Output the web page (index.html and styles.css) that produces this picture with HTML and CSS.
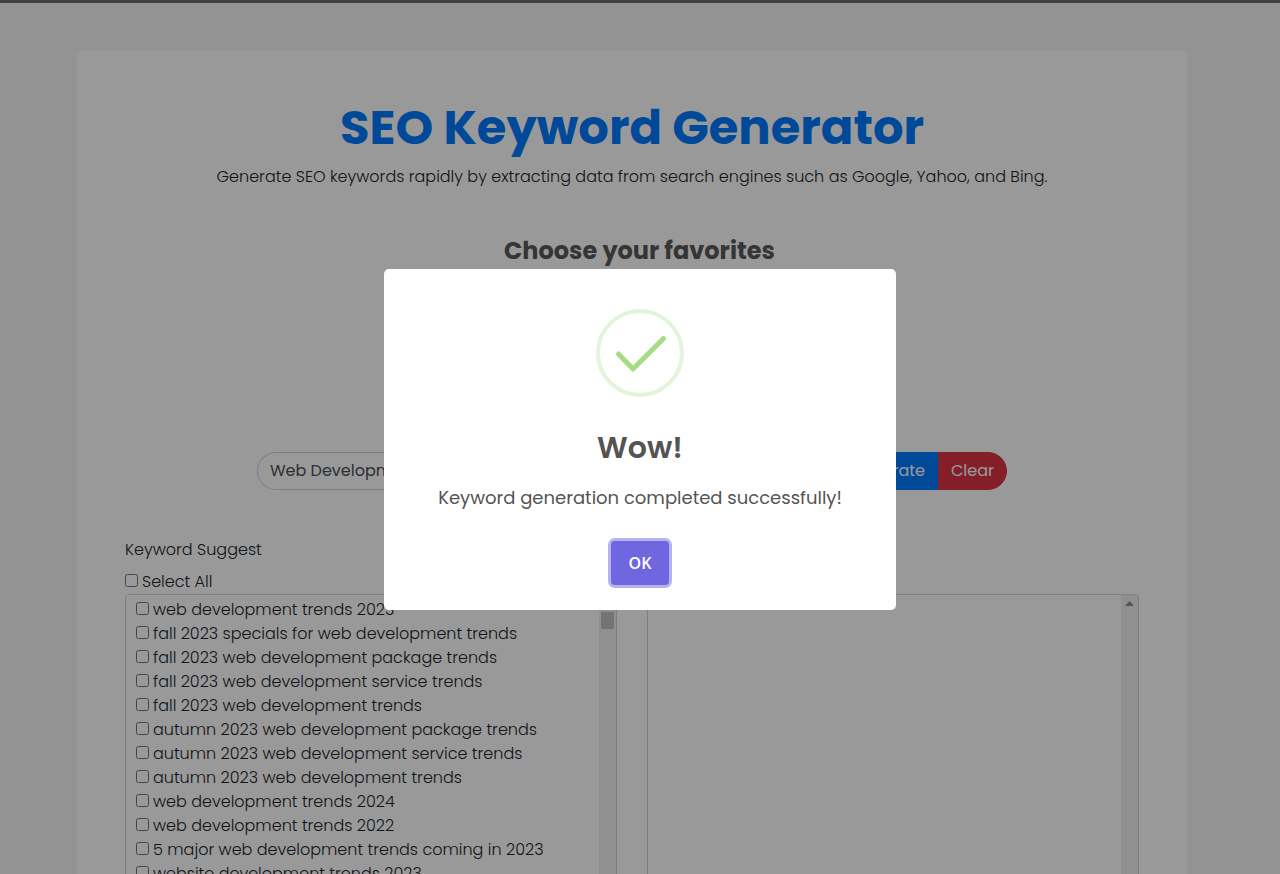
FILE: index.html
```
<!DOCTYPE html>
<html lang="en">
<head>
    <meta charset="UTF-8">
    <meta name="viewport" content="width=device-width, initial-scale=1">
    <title>SEO Keyword Generator</title>
    <link rel="stylesheet" href="styles.css">
</head>
<body>

    <main class="page">
        <div class="card">
            <header class="intro">
                <h1>SEO Keyword Generator</h1>
                <p>Generate SEO keywords rapidly by extracting data from search engines such as Google, Yahoo, and Bing.</p>
            </header>

            <section class="favorites">
                <h2>Choose your favorites</h2>
            </section>

            <form class="search">
                <input type="text" class="search-input" value="Web Development Trends" aria-label="Keyword">
                <button type="button" class="btn-generate">Generate</button>
                <button type="button" class="btn-clear">Clear</button>
            </form>

            <div class="results">
                <section class="result">
                    <p class="result-title">Keyword Suggest</p>
                    <label class="check"><input type="checkbox" id="selectAll">Select All</label>
                    <div class="box">
                        <div class="box-list">
                            <label class="check"><input type="checkbox">web development trends 2023</label>
                            <label class="check"><input type="checkbox">fall 2023 specials for web development trends</label>
                            <label class="check"><input type="checkbox">fall 2023 web development package trends</label>
                            <label class="check"><input type="checkbox">fall 2023 web development service trends</label>
                            <label class="check"><input type="checkbox">fall 2023 web development trends</label>
                            <label class="check"><input type="checkbox">autumn 2023 web development package trends</label>
                            <label class="check"><input type="checkbox">autumn 2023 web development service trends</label>
                            <label class="check"><input type="checkbox">autumn 2023 web development trends</label>
                            <label class="check"><input type="checkbox">web development trends 2024</label>
                            <label class="check"><input type="checkbox">web development trends 2022</label>
                            <label class="check"><input type="checkbox">5 major web development trends coming in 2023</label>
                            <label class="check"><input type="checkbox">website development trends 2023</label>
                        </div>
                        <div class="scrollbar">
                            <svg width="9" height="5" viewBox="0 0 9 5"><path d="M0 5 4.500 0 9 5z" fill="#8a8a8a"/></svg>
                            <span class="thumb"></span>
                        </div>
                    </div>
                </section>

                <section class="result result-right">
                    <div class="box">
                        <textarea class="box-list" aria-label="Selected keywords"></textarea>
                        <div class="scrollbar">
                            <svg width="9" height="5" viewBox="0 0 9 5"><path d="M0 5 4.500 0 9 5z" fill="#8a8a8a"/></svg>
                        </div>
                    </div>
                </section>
            </div>
        </div>
    </main>

    <div class="overlay">
        <div class="modal" role="dialog" aria-modal="true" aria-labelledby="modalTitle">
            <svg class="modal-icon" width="88" height="88" viewBox="0 0 88 88" fill="none">
                <circle cx="44" cy="44" r="42" stroke="#e4f4da" stroke-width="4"/>
                <path d="M22.500 45 37 60 67.500 29.500" stroke="#a5dc86" stroke-width="5" stroke-linecap="round" stroke-linejoin="round"/>
            </svg>
            <h2 class="modal-title" id="modalTitle">Wow!</h2>
            <p class="modal-text">Keyword generation completed successfully!</p>
            <button type="button" class="modal-ok">OK</button>
        </div>
    </div>

</body>
</html>
```
FILE: styles.css
```
* {
    box-sizing: border-box;
}

body {
    margin: 0;
    padding-right: 16px;
    border-top: 3px solid #696969;
    background-color: #f5f5f5;
    color: #212529;
    font-family: Poppins, Inter, sans-serif;
    font-size: 16px;
    font-weight: 300;
    line-height: 24px;
    overflow: hidden;
}

h1, h2, p {
    margin: 0;
}

button, input, textarea {
    font-family: inherit;
    font-size: inherit;
}

.page {
    max-width: 1140px;
    margin: 0 auto;
    padding: 48px 15px;
}

.card {
    padding: 48px;
    border-radius: 4px;
    background-color: #fff;
}

.intro {
    text-align: center;
}

.intro h1 {
    margin-bottom: 8px;
    color: #007bff;
    font-size: 48px;
    font-weight: 700;
    line-height: 58px;
}

.favorites {
    min-height: 216px;
    margin-top: 47px;
    padding-left: 15px;
    text-align: center;
}

.favorites h2 {
    color: #595959;
    font-size: 24px;
    font-weight: 700;
    line-height: 30px;
}

.search {
    display: flex;
    max-width: 750px;
    height: 38px;
    margin: 0 auto 48px;
}

.search-input {
    flex: 1;
    min-width: 0;
    padding: 5px 12px 7px;
    border: 1px solid #ced4da;
    border-right: none;
    border-radius: 19px 0 0 19px;
    background-color: #fff;
    color: #495057;
}

.search button {
    padding: 5px 12px 7px;
    border: 1px solid transparent;
    color: #fff;
    cursor: pointer;
}

.search .btn-generate {
    border-color: #007bff;
    background-color: #007bff;
}

.search .btn-clear {
    border-color: #dc3545;
    border-radius: 0 19px 19px 0;
    background-color: #dc3545;
}

/* results */
.results {
    display: grid;
    grid-template-columns: 1fr 1fr;
    gap: 30px;
}

.result-title {
    margin-bottom: 8px;
}

.result-right {
    display: flex;
    flex-direction: column;
    justify-content: flex-end;
}

.check {
    display: flex;
    align-items: center;
    gap: 4px;
}

.check input {
    width: 13px;
    height: 13px;
    margin: 0 0 4px;
}

.box {
    display: flex;
    height: 400px;
    border: 1px solid #ced4da;
    border-radius: 4px;
    overflow: hidden;
}

.box-list {
    flex: 1;
    padding: 3px 10px;
    border: none;
    background-color: #fff;
    resize: none;
    overflow: hidden;
}

.scrollbar {
    display: flex;
    flex-direction: column;
    align-items: center;
    gap: 6px;
    width: 17px;
    padding-top: 6px;
    background-color: #f1f1f1;
}

.thumb {
    width: 13px;
    height: 17px;
    background-color: #c1c1c1;
}

/* success popup */
.overlay {
    position: fixed;
    inset: 0;
    display: flex;
    align-items: center;
    justify-content: center;
    padding-top: 4px;
    background-color: rgba(0, 0, 0, .4);
}

.modal {
    display: flex;
    flex-direction: column;
    align-items: center;
    width: 40%;
    padding: 40px 20px 25px;
    border-radius: 5px;
    background-color: #fff;
    text-align: center;
}

.modal-title {
    margin-top: 33px;
    color: #545454;
    font-size: 30px;
    font-weight: 600;
    line-height: 36px;
}

.modal-text {
    margin-top: 19px;
    color: #545454;
    font-size: 18px;
    font-weight: 400;
    line-height: 26px;
}

.modal-ok {
    width: 58px;
    height: 44px;
    margin-top: 30px;
    padding: 0;
    border: none;
    border-radius: 4px;
    background-color: #7066e0;
    box-shadow: 0 0 0 3px #b7b2ef;
    color: #fff;
    font-family: "Open Sans", sans-serif;
    font-size: 16px;
    font-weight: 600;
    cursor: pointer;
}
```
